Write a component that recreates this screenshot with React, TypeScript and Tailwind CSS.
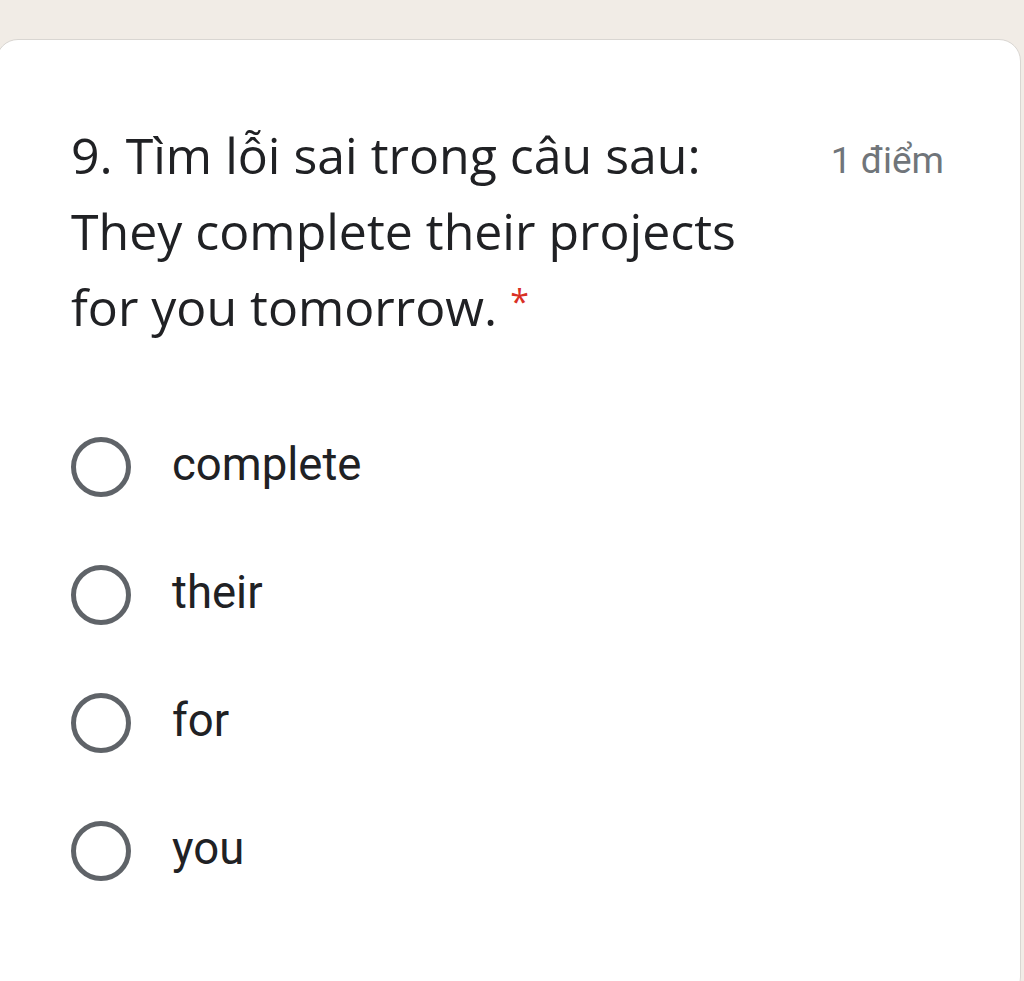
export default function App() {
  const options = ["complete", "their", "for", "you"];
  return (
    <div className="w-[1024px] h-[981px] overflow-hidden bg-[#f1ece6] pt-[39px] font-['Roboto',sans-serif]">
      <div className="ml-[-4px] mr-[3px] h-[960px] rounded-[22px] border border-[#d9d6d2] bg-white">
        <div className="flex items-start pl-[74px] pr-[76px] pt-[87px]">
          <div className="w-[700px] text-[50px] leading-[76px] text-[#202124] font-['Open_Sans',sans-serif] -mt-[10px]">
            9. Tìm lỗi sai trong câu sau:
            <br />
            They complete their projects
            <br />
            for you tomorrow.{" "}
            <span className="relative top-[-12px] text-[34px] text-[#d93025]">*</span>
          </div>
          <div className="ml-auto text-[37px] text-[#70757a] mt-[6px]">1 điểm</div>
        </div>
        <div className="mt-[86px] flex flex-col gap-[68px] pl-[74px]">
          {options.map((o) => (
            <div key={o} className="flex items-center h-[60px]">
              <div className="w-[60px] h-[60px] rounded-full border-[5px] border-[#5f6368]" />
              <span className="ml-[41px] -mt-[4px] text-[45.5px] text-[#202124]">{o}</span>
            </div>
          ))}
        </div>
      </div>
    </div>
  );
}
